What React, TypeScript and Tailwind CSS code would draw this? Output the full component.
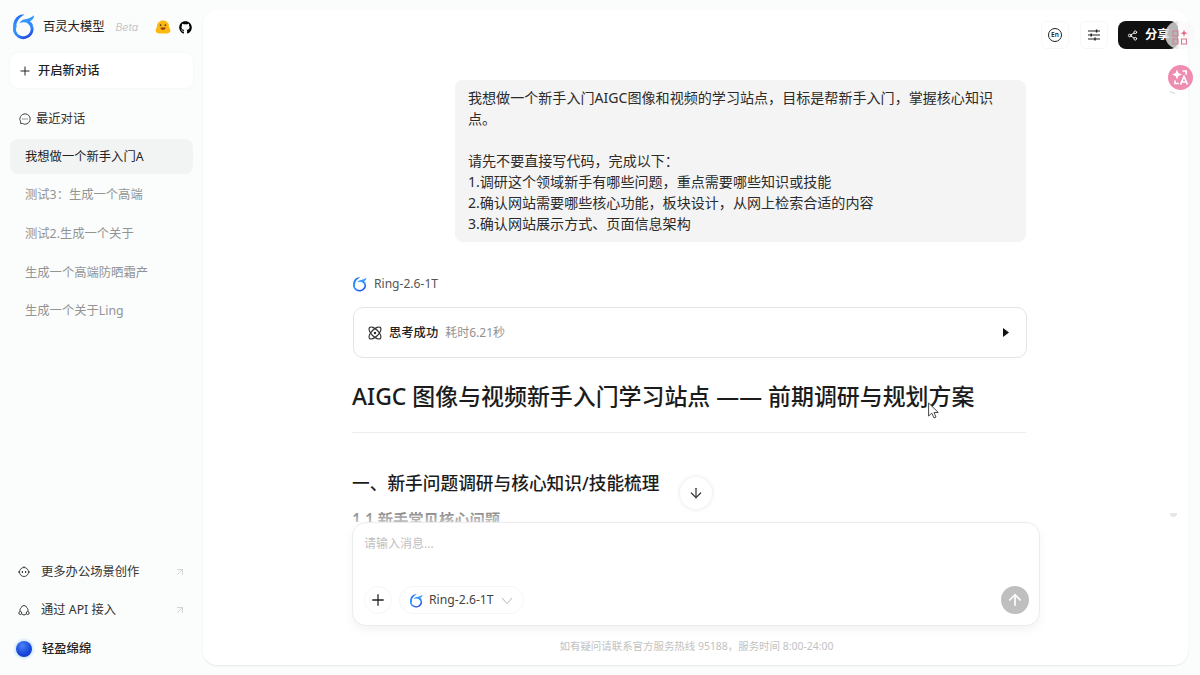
import type { ReactNode } from "react";
import { Plus, ArrowDown, ArrowUp, ArrowUpRight, Share2, Atom } from "lucide-react";
import { FaGithub } from "react-icons/fa";

const history = [
  "我想做一个新手入门A",
  "测试3：生成一个高端",
  "测试2.生成一个关于",
  "生成一个高端防晒霜产",
  "生成一个关于Ling",
];

function Logo({ className }: { className?: string }) {
  return (
    <svg viewBox="1 1 22 26.5" preserveAspectRatio="none" fill="none" className={className}>
      <defs>
        <linearGradient id="ring" x1="2" y1="4" x2="16" y2="26" gradientUnits="userSpaceOnUse">
          <stop stopColor="#2b62f0" />
          <stop offset="0.35" stopColor="#2f9bff" />
          <stop offset="0.7" stopColor="#2d86fa" />
          <stop offset="1" stopColor="#2440e0" />
        </linearGradient>
      </defs>
      <path
        d="M12.6 1.6C8.6 .8 4.8 3 2.8 6.8C.8 10.6.6 15 2.2 19L4.4 15C3.8 10.2 6.6 4.8 12.6 1.6Z"
        fill="url(#ring)"
      />
      <path
        d="M3.4 12.4A8.8 8.8 0 1 0 16.4 9.2"
        stroke="url(#ring)"
        strokeWidth="2.9"
      />
      <path
        d="M7.4 10.4C8.8 7.6 11 6.6 14.2 6.1C17.4 5.6 19.8 4.4 22 2.4C22 5.6 20.4 7.6 17.8 8.4C19.2 9.2 20.2 10.3 20.8 11.6L18.6 13.2C16.6 9.4 11.8 8.2 7.4 10.4Z"
        fill="url(#ring)"
      />
    </svg>
  );
}

function HuggingFace() {
  return (
    <svg viewBox="0 0 16 14" className="h-[14px] w-4">
      <path d="M8 .5C4.4.5 2 3 2 6.2C2 7.6.6 8.7.6 10.6C.6 12.5 2 13.5 4 13.4H12C14 13.5 15.4 12.5 15.4 10.6C15.4 8.7 14 7.6 14 6.2C14 3 11.6.5 8 .5Z" fill="#fdb813" />
      <circle cx="5.6" cy="5.2" r="0.9" fill="#54401c" />
      <circle cx="10.4" cy="5.2" r="0.9" fill="#54401c" />
      <path d="M5.4 7.4H10.6C10.4 9 9.4 9.8 8 9.8C6.6 9.8 5.6 9 5.4 7.4Z" fill="#8a3b18" />
    </svg>
  );
}

function ChatIcon() {
  return (
    <svg viewBox="0 0 12 12" fill="none" stroke="#333" className="h-3 w-3">
      <path d="M6 .8A5.2 5.2 0 1 1 3.4 10.5L1.6 10.6L1.7 8.9A5.2 5.2 0 0 1 6 .8Z" strokeWidth="0.9" />
      <path d="M3.4 6H4.4M5.5 6H6.5M7.6 6H8.6" strokeWidth="1.1" />
    </svg>
  );
}

function BotIcon() {
  return (
    <svg viewBox="0 0 12 12" fill="none" stroke="#333" className="h-3 w-3">
      <circle cx="6" cy="6" r="4.5" strokeWidth="0.9" />
      <path d="M0 6H1.5M10.5 6H12M6 .3V1.5" strokeWidth="1" />
      <path d="M4.4 5V7M7.6 5V7" strokeWidth="1.1" />
    </svg>
  );
}

function ApiIcon() {
  return (
    <svg viewBox="0 0 12 12" fill="none" stroke="#333" strokeWidth="0.95" className="h-3 w-3">
      <path d="M3.3 3.4C2.3 4.4 1.8 5.8 2 7.2M8.7 3.4C9.7 4.4 10.2 5.8 10 7.2M4.1 10.5C5.3 11 6.7 11 7.9 10.5" />
      <path d="M3.4 3.5A2.7 2.7 0 0 1 8.6 3.5" />
      <circle cx="2.3" cy="9" r="1.5" />
      <circle cx="9.7" cy="9" r="1.5" />
    </svg>
  );
}

function SlidersIcon() {
  return (
    <svg viewBox="0 0 12 12" fill="none" stroke="#222" strokeWidth="1" className="h-3 w-3">
      <path d="M0 2H12M0 6H12M0 10H12" />
      <path d="M8.6 .5V3.5M3.2 4.5V7.5M7 8.5V11.5" strokeWidth="1.5" />
    </svg>
  );
}

function SideLink({ icon, children }: { icon: ReactNode; children: ReactNode }) {
  return (
    <div className="flex h-[38.5px] items-center pl-2 pr-[7px]">
      {icon}
      <span className="ml-[11px] flex-1 text-[12.3px] text-[#333]">{children}</span>
      <ArrowUpRight className="h-3 w-3 text-[#cfcfcf]" strokeWidth={1.8} />
    </div>
  );
}

function Sidebar() {
  return (
    <aside className="flex w-[203px] shrink-0 flex-col px-[10px]">
      <div className="flex h-[53px] items-center whitespace-nowrap pl-[3px] pt-px">
        <Logo className="h-[26px] w-[22px] shrink-0" />
        <span className="ml-2 text-[12.3px] text-[#222]">百灵大模型</span>
        <span className="ml-[11px] w-[23px] pt-px font-[Inter] text-[10.5px] italic text-[#c4c6c6]">Beta</span>
        <span className="ml-4 shrink-0">
          <HuggingFace />
        </span>
        <FaGithub className="ml-2 h-[13px] w-[13px] shrink-0 text-black" />
      </div>

      <button className="flex h-[35px] w-[183px] items-center rounded-lg bg-white pl-2 pt-px text-[12.3px] font-medium text-[#222] shadow-[0_0_3px_rgba(0,0,0,0.05)]">
        <Plus className="h-[14px] w-[14px]" strokeWidth={1.7} />
        <span className="ml-[6px]">开启新对话</span>
      </button>

      <div className="mt-[21px] flex h-5 items-center pl-[9px] text-[12.3px] text-[#333]">
        <ChatIcon />
        <span className="ml-[5px]">最近对话</span>
      </div>

      <ul className="mt-[10px] space-y-[3.6px]">
        {history.map((title, i) => (
          <li
            key={title}
            className={
              i === 0
                ? "flex h-[35px] w-[183px] items-center rounded-lg bg-[#f2f3f3] pl-[15px] pt-px text-[12.3px] text-[#222]"
                : "flex h-[35px] w-[183px] items-center rounded-lg pl-[15px] pt-px text-[12.3px] text-[#929494]"
            }
          >
            {title}
          </li>
        ))}
      </ul>

      <div className="mt-auto pb-[7px]">
        <SideLink icon={<BotIcon />}>更多办公场景创作</SideLink>
        <SideLink icon={<ApiIcon />}>通过 API 接入</SideLink>
        <div className="flex h-[38.5px] items-center pl-[6px]">
          <span className="h-4 w-4 rounded-full bg-[radial-gradient(circle_at_40%_30%,#4b83f5,#1748dc_55%,#0b2fb4)] shadow-[0_0_2px_2px_#d3ebfa]" />
          <span className="ml-[10px] text-[12.3px] font-medium text-[#222]">轻盈绵绵</span>
        </div>
      </div>
    </aside>
  );
}

function Composer() {
  return (
    <div className="relative z-10 ml-[149px] flex h-[104px] w-[688px] shrink-0 flex-col justify-between rounded-[14px] border border-[#ececec] bg-white px-[11px] pb-[11px] pt-3 shadow-[0_4px_10px_rgba(0,0,0,0.05)]">
      <div className="text-[12px] leading-[17px] text-[#bfbfbf]">请输入消息...</div>
      <div className="flex items-center">
        <span className="flex h-7 w-7 items-center justify-center rounded-full border border-[#f5f5f5]">
          <Plus className="h-[18px] w-[18px] text-[#222]" strokeWidth={1.7} />
        </span>
        <span className="ml-[7px] flex h-7 w-[125px] items-center rounded-full border border-[#f5f5f5] pl-[10px] pt-px text-[12.2px] text-[#444]">
          <Logo className="h-[14px] w-[13px]" />
          <span className="ml-[6px]">Ring-2.6-1T</span>
          <svg viewBox="0 0 12 8" fill="none" stroke="#b5b5b5" strokeWidth="1" className="ml-[7px] h-2 w-3">
            <path d="M1 1L6 6.6L11 1" />
          </svg>
        </span>
        <span className="ml-auto mr-[-1px] flex h-7 w-7 items-center justify-center rounded-full bg-[#bfbfbf]">
          <ArrowUp className="h-[18px] w-[18px] text-white" strokeWidth={2.2} />
        </span>
      </div>
      <span className="absolute left-[327px] top-[-46px] flex h-8 w-8 items-center justify-center rounded-full bg-white shadow-[0_0_5px_rgba(0,0,0,0.11)]">
        <ArrowDown className="h-4 w-4 text-[#333]" strokeWidth={1.8} />
      </span>
    </div>
  );
}

function Conversation() {
  return (
    <div className="relative h-[472px] shrink-0 overflow-hidden pl-[149px]">
      <div className="ml-[103px] mt-[30px] h-[162px] w-[571px] whitespace-pre-line rounded-lg bg-[#f4f4f4] px-[13px] py-[6.6px] text-[14.07px] leading-[21.1px] text-[#2b2b2b]">
        {`我想做一个新手入门AIGC图像和视频的学习站点，目标是帮新手入门，掌握核心知识点。

请先不要直接写代码，完成以下：
1.调研这个领域新手有哪些问题，重点需要哪些知识或技能
2.确认网站需要哪些核心功能，板块设计，从网上检索合适的内容
3.确认网站展示方式、页面信息架构`}
      </div>

      <div className="mt-8 flex h-5 items-center">
        <Logo className="ml-px h-[15px] w-[14px]" />
        <span className="ml-[7px] text-[12.1px] text-[#555]">Ring-2.6-1T</span>
      </div>

      <div className="ml-px mt-[13px] flex h-[51px] w-[674px] items-center rounded-[10px] border border-[#e4e4e4] pl-[13px] pr-[17px]">
        <Atom className="h-4 w-4 text-[#333]" strokeWidth={1.8} />
        <span className="ml-[6px] pt-px text-[12.3px] font-medium text-[#222]">思考成功</span>
        <span className="ml-[7px] text-[12px] text-[#929292]">耗时6.21秒</span>
        <svg viewBox="0 0 6 9" className="ml-auto h-[9px] w-[6px]">
          <path d="M0 0L6 4.5L0 9Z" fill="#111" />
        </svg>
      </div>

      <h1 className="mt-[21px] text-[22.93px] font-medium leading-[34px] text-[#1c1c1c]">
        AIGC 图像与视频新手入门学习站点 —— 前期调研与规划方案
      </h1>
      <hr className="mt-[19px] w-[674px] border-[#ededed]" />
      <h2 className="mt-[37px] text-[17.7px] font-medium leading-[26px] text-[#1c1c1c]">
        一、新手问题调研与核心知识/技能梳理
      </h2>
      <h3 className="mt-[12px] text-[15.3px] font-semibold leading-[22px] text-[#666]">1.1 新手常见核心问题</h3>
      <div className="absolute inset-x-0 bottom-0 h-4 bg-linear-to-b from-white/0 to-white/60" />
    </div>
  );
}

export default function App() {
  return (
    <div className="relative flex h-[675px] w-[1200px] overflow-hidden bg-[#fbfcfc] font-['Noto_Sans','Noto_Sans_CJK_SC',sans-serif]">
      <Sidebar />
      <main className="mb-[10px] mt-[10px] flex w-[985px] flex-col overflow-hidden rounded-[14px] bg-white shadow-[0_1px_2px_rgba(0,0,0,0.08)]">
        <header className="flex h-10 shrink-0 items-end justify-end pr-[10px]">
          <span className="mb-px flex h-7 w-7 items-center justify-center rounded-md border border-[#f7f7f7]">
            <span className="flex h-[14px] w-[14px] items-center justify-center rounded-full border border-[#222] text-[6.5px] font-semibold text-[#222]">
              En
            </span>
          </span>
          <span className="mb-px ml-[11px] flex h-7 w-7 items-center justify-center rounded-md border border-[#f7f7f7]">
            <SlidersIcon />
          </span>
          <button className="mb-px ml-[10px] flex h-7 w-[60px] items-center rounded-lg bg-[#111] pl-[9px] pt-px text-[12.3px] font-semibold text-white">
            <Share2 className="h-[11px] w-[11px]" strokeWidth={2} />
            <span className="ml-[7px] whitespace-nowrap">分享</span>
          </button>
        </header>
        <Conversation />
        <Composer />
        <p className="ml-[149px] mt-[12px] w-[689px] text-center text-[10.45px] leading-4 text-[#c2c2c2]">
          如有疑问请联系官方服务热线 95188，服务时间 8:00-24:00
        </p>
      </main>

      {/* floating browser-extension buttons */}
      <div className="absolute left-[1165px] top-[21px] h-7 w-[30px] rounded-full bg-[linear-gradient(90deg,rgba(225,225,225,0.8)_12px,rgba(250,245,246,0.5)_14px)]" />
      <svg viewBox="0 0 16 16" fill="none" stroke="#cf7f92" strokeWidth="1.1" className="absolute left-[1172px] top-[29px] h-4 w-4">
        <path d="M1 2H6V7H1ZM1 10H6V15H1ZM9.5 10H14.5V15H9.5Z" />
        <path d="M12 .5L12.9 3.3L15.6 4.2L12.9 5.1L12 8L11.1 5.1L8.4 4.2L11.1 3.3Z" fill="#e0647f" stroke="none" />
      </svg>
      <div className="absolute left-[1168px] top-[65px] flex h-[25px] w-[25px] items-center justify-center rounded-full bg-[#ee8db1]">
        <svg viewBox="0 0 18 18" fill="none" stroke="#fff" strokeWidth="1.7" className="h-[18px] w-[18px]">
          <path d="M5 .5L6.4 4.1L10 5.5L6.4 6.9L5 10.5L3.6 6.9L0 5.5L3.6 4.1Z" fill="#fff" stroke="none" />
          <path d="M10.5 2H14.2V5.5M3 11.5V14.5H6.8" />
          <path d="M8.5 15.5L12 7.5L15.5 15.5M9.8 13H14.2" />
        </svg>
      </div>
      <svg viewBox="0 0 6 3" className="absolute left-[1170px] top-[91px] h-[3px] w-[6px]">
        <path d="M0 .5L5 2.5" stroke="#ccd3d3" />
      </svg>
      <div className="absolute left-[1170px] top-[513px] h-1 w-[7px] rounded-b-full bg-[#e6e6e6]" />

      {/* mouse pointer */}
      <svg viewBox="0 0 12 17" className="absolute left-[928px] top-[402px] h-[17px] w-3">
        <path d="M.6 1V14L3.8 11.2L6 16L8 15L6 10.5H10.3Z" fill="#fff" stroke="#333" strokeWidth="0.9" />
      </svg>
    </div>
  );
}
